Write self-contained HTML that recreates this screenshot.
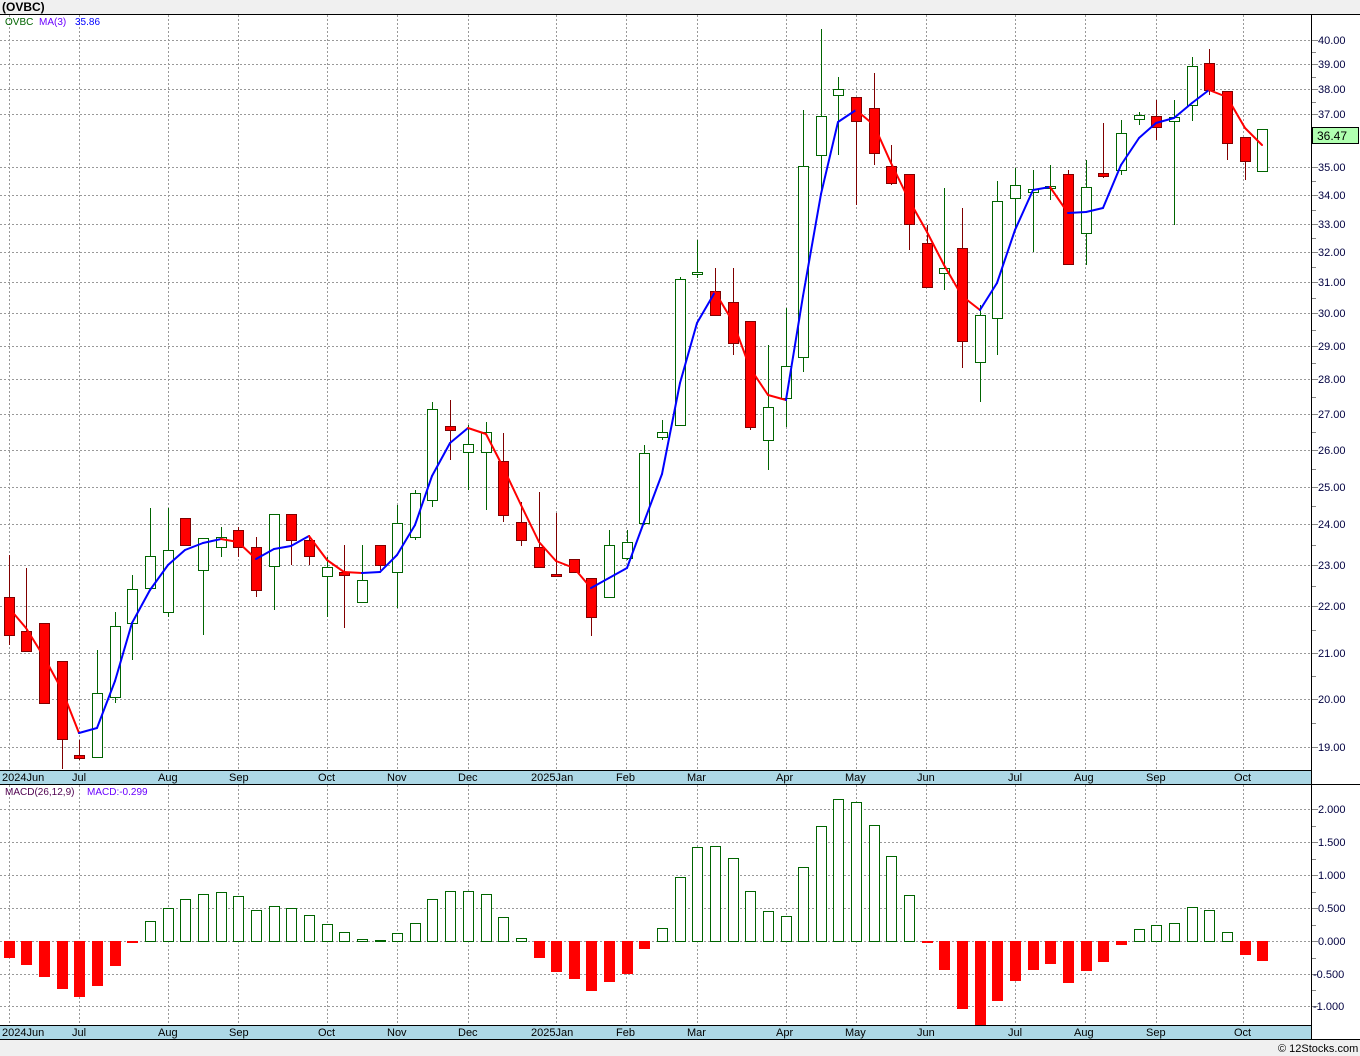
<!DOCTYPE html>
<html><head><meta charset="utf-8"><style>
html,body{margin:0;padding:0;background:#fff;}
body{width:1360px;height:1056px;position:relative;overflow:hidden;font-family:"Liberation Sans",sans-serif;}
svg{position:absolute;left:0;top:0;}
</style></head><body>
<svg id="s" width="1360" height="1056" xmlns="http://www.w3.org/2000/svg" font-family="Liberation Sans, sans-serif">
<rect x="0" y="0" width="1360" height="14" fill="#f0f0f0"/>
<rect x="0" y="1039" width="1360" height="17" fill="#f0f0f0"/>
<g id="grid"></g>
<rect x="0" y="770" width="1311" height="14" fill="#add8e6"/>
<rect x="0" y="1025" width="1311" height="14" fill="#add8e6"/>
<g stroke="#000" stroke-width="1" fill="none">
<line x1="0" y1="14.5" x2="1360" y2="14.5"/>
<line x1="0" y1="770.5" x2="1311" y2="770.5"/>
<line x1="0" y1="784.5" x2="1360" y2="784.5"/>
<line x1="0" y1="1025.5" x2="1311" y2="1025.5"/>
<line x1="0" y1="1039.5" x2="1360" y2="1039.5"/>
<line x1="1311.5" y1="14" x2="1311.5" y2="1039"/>
</g>
<g id="data"></g>
<text x="2" y="11" font-size="12" font-weight="bold">(OVBC)</text>
<text x="5" y="25" font-size="10" fill="#006400">OVBC</text>
<text x="39" y="25" font-size="10" fill="#6a00ff">MA(3)</text>
<text x="75" y="25" font-size="10" fill="#0000ff">35.86</text>
<text x="5" y="795" font-size="10" fill="#500050">MACD(26,12,9)</text>
<text x="87" y="795" font-size="10" fill="#6a00ff">MACD:-0.299</text>
<g font-size="11" fill="#000" id="dates1">
<text x="2" y="781">2024Jun</text><text x="72" y="781">Jul</text><text x="158" y="781">Aug</text><text x="229" y="781">Sep</text><text x="318" y="781">Oct</text><text x="387" y="781">Nov</text><text x="458" y="781">Dec</text><text x="531" y="781">2025Jan</text><text x="616" y="781">Feb</text><text x="687" y="781">Mar</text><text x="776" y="781">Apr</text><text x="845" y="781">May</text><text x="917" y="781">Jun</text><text x="1008" y="781">Jul</text><text x="1074" y="781">Aug</text><text x="1146" y="781">Sep</text><text x="1234" y="781">Oct</text>
</g>
<g font-size="11" fill="#000">
<text x="2" y="1036">2024Jun</text><text x="72" y="1036">Jul</text><text x="158" y="1036">Aug</text><text x="229" y="1036">Sep</text><text x="318" y="1036">Oct</text><text x="387" y="1036">Nov</text><text x="458" y="1036">Dec</text><text x="531" y="1036">2025Jan</text><text x="616" y="1036">Feb</text><text x="687" y="1036">Mar</text><text x="776" y="1036">Apr</text><text x="845" y="1036">May</text><text x="917" y="1036">Jun</text><text x="1008" y="1036">Jul</text><text x="1074" y="1036">Aug</text><text x="1146" y="1036">Sep</text><text x="1234" y="1036">Oct</text>
</g>
<g font-size="11" fill="#000040">
<text x="1318" y="44">40.00</text><text x="1318" y="68">39.00</text><text x="1318" y="93">38.00</text><text x="1318" y="118">37.00</text><text x="1318" y="171">35.00</text><text x="1318" y="199">34.00</text><text x="1318" y="228">33.00</text><text x="1318" y="256">32.00</text><text x="1318" y="286">31.00</text><text x="1318" y="317">30.00</text><text x="1318" y="350">29.00</text><text x="1318" y="383">28.00</text><text x="1318" y="418">27.00</text><text x="1318" y="454">26.00</text><text x="1318" y="491">25.00</text><text x="1318" y="528">24.00</text><text x="1318" y="569">23.00</text><text x="1318" y="610">22.00</text><text x="1318" y="657">21.00</text><text x="1318" y="703">20.00</text><text x="1318" y="751">19.00</text>
<text x="1318" y="813">2.000</text><text x="1318" y="846">1.500</text><text x="1318" y="879">1.000</text><text x="1318" y="912">0.500</text><text x="1318" y="945">0.000</text><text x="1313" y="978">-0.500</text><text x="1313" y="1010">-1.000</text>
</g>
<rect x="1312.5" y="127.5" width="46" height="16" fill="#b0ffb0" stroke="#000"/>
<text x="1317" y="140" font-size="12" fill="#000">36.47</text>
<text x="1278" y="1052" font-size="11" fill="#000">© 12Stocks.com</text>
</svg>
<script>
var NS="http://www.w3.org/2000/svg";
function el(p,t,a){var e=document.createElementNS(NS,t);for(var k in a)e.setAttribute(k,a[k]);p.appendChild(e);return e;}
var g=document.getElementById('grid'),d=document.getElementById('data');
var months=[9,79,168,238,327,397,468,556,626,697,786,856,926,1015,1085,1156,1243];
months.forEach(function(x){
 el(g,'line',{x1:x+.5,y1:15,x2:x+.5,y2:770,stroke:'#999','stroke-dasharray':'2,2'});
 el(g,'line',{x1:x+.5,y1:785,x2:x+.5,y2:1025,stroke:'#999','stroke-dasharray':'2,2'});
 el(g,'line',{x1:x+.5,y1:1025,x2:x+.5,y2:1031,stroke:'#999'});
 el(g,'line',{x1:x+.5,y1:770,x2:x+.5,y2:776,stroke:'#999'});
});
var py=[40,64,89,114,167,195,224,252,282,313,346,379,414,450,487,524,565,606,653,699,747];
py.forEach(function(y){el(g,'line',{x1:0,y1:y+.5,x2:1311,y2:y+.5,stroke:'#999','stroke-dasharray':'2,2'});el(g,'line',{x1:1311,y1:y+.5,x2:1318,y2:y+.5,stroke:'#888'});});
for(var i=0;i<py.length-1;i++){var m=Math.round((py[i]+py[i+1])/2);el(g,'line',{x1:1311,y1:m+.5,x2:1316,y2:m+.5,stroke:'#888'});}
el(g,'line',{x1:1311,y1:140.5,x2:1318,y2:140.5,stroke:'#888'});
var my=[809,842,875,908,941,974,1006];
my.forEach(function(y){el(g,'line',{x1:0,y1:y+.5,x2:1311,y2:y+.5,stroke:'#999','stroke-dasharray':'2,2'});el(g,'line',{x1:1311,y1:y+.5,x2:1318,y2:y+.5,stroke:'#888'});});
for(var i=0;i<my.length-1;i++){var m=Math.round((my[i]+my[i+1])/2);el(g,'line',{x1:1311,y1:m+.5,x2:1316,y2:m+.5,stroke:'#888'});}
// candles: x, dir(1 up,0 down), bodyTop, bodyBot, wickTop, wickBot
var C=[[9,0,597,635,555,645],[26,0,631,651,568,652],[44,0,623,703,623,704],[62,0,661,739,661,769],[79,0,755,758,740,760],[97,1,693,757,650,758],[115,1,626,697,612,703],[132,1,589,623,575,660],[150,1,556,588,508,590],[168,1,550,612,508,617],[185,0,518,545,518,545],[203,1,538,570,538,635],[221,1,537,547,527,557],[238,0,530,547,527,557],[256,0,547,590,537,597],[274,1,514,566,514,610],[291,0,514,540,514,565],[309,0,540,556,535,565],[327,1,567,576,557,617],[344,0,572,575,545,628],[362,1,580,602,545,602],[380,0,545,565,545,570],[397,1,523,572,505,608],[415,1,493,537,490,540],[432,1,409,500,402,507],[450,0,426,430,400,460],[468,1,444,452,425,490],[486,1,432,452,422,510],[503,0,461,515,433,522],[521,0,522,540,502,546],[539,0,547,567,492,567],[556,0,574,576,513,577],[574,0,559,572,559,572],[591,0,578,617,578,636],[609,1,545,597,530,597],[627,1,542,558,530,560],[644,1,453,523,445,525],[662,1,432,437,420,440],[680,1,279,425,277,426],[697,1,272,274,240,278],[715,0,291,315,268,315],[733,0,302,343,268,355],[750,0,321,427,321,430],[768,1,407,440,345,470],[786,1,366,398,308,427],[803,1,166,357,110,372],[821,1,116,155,29,192],[838,1,89,95,77,155],[856,0,97,121,97,205],[874,0,108,153,73,165],[891,0,166,183,145,185],[909,0,174,224,174,250],[927,0,243,287,225,288],[944,1,268,273,188,290],[962,0,248,341,208,368],[980,1,315,362,305,402],[997,1,201,318,181,355],[1015,1,185,198,168,230],[1033,1,189,192,170,252],[1050,1,186,188,165,200],[1068,0,174,264,170,265],[1086,1,187,233,160,265],[1103,0,173,176,123,178],[1121,1,133,170,120,175],[1139,1,115,119,112,125],[1156,0,116,127,100,140],[1174,1,117,121,100,225],[1192,1,66,105,57,121],[1209,0,63,90,49,95],[1227,0,91,143,91,160],[1245,0,137,161,137,180],[1262,1,129,171,129,171]];
C.forEach(function(c){
 var col=c[1]?'#006400':'#800000';
 el(d,'line',{x1:c[0]+.5,y1:c[4],x2:c[0]+.5,y2:c[5],stroke:col});
 el(d,'rect',{x:c[0]-5+.5,y:c[2]+.5,width:10,height:Math.max(1,c[3]-c[2]),fill:c[1]?'#fff':'#f00',stroke:c[1]?'#006400':'#800000'});
});
var M=[[9,608],[26,628],[44,657],[62,690],[79,733],[97,728],[115,681],[132,623],[150,590],[168,565],[185,550],[203,543],[221,539],[238,542],[256,559],[274,549],[291,546],[309,536],[327,560],[344,572],[362,573],[380,572],[397,555],[415,525],[432,476],[450,443],[468,428],[486,434],[503,467],[521,505],[539,542],[556,561],[574,568],[591,588],[609,578],[627,568],[644,522],[662,474],[680,383],[697,323],[715,292],[733,322],[750,368],[768,395],[786,400],[803,296],[821,194],[838,122],[856,110],[874,125],[891,163],[909,200],[927,232],[944,265],[962,296],[980,310],[997,283],[1015,230],[1033,190],[1050,187],[1068,213],[1086,212],[1103,208],[1121,165],[1139,138],[1156,123],[1174,118],[1192,103],[1209,90],[1227,97],[1245,128],[1262,145]];
for(var i=1;i<M.length;i++){el(d,'line',{x1:M[i-1][0],y1:M[i-1][1],x2:M[i][0],y2:M[i][1],stroke:M[i][1]>M[i-1][1]?'#f00':'#00f','stroke-width':2,'stroke-linecap':'round'});}
var B=[[9,958],[26,965],[44,977],[62,989],[79,997],[97,986],[115,966],[132,943],[150,921],[168,908],[185,899],[203,894],[221,892],[238,896],[256,910],[274,906],[291,908],[309,915],[327,924],[344,932],[362,939],[380,940],[397,933],[415,923],[432,899],[450,891],[468,891],[486,894],[503,917],[521,938],[539,958],[556,972],[574,979],[591,991],[609,982],[627,974],[644,949],[662,928],[680,877],[697,847],[715,846],[733,858],[750,891],[768,911],[786,916],[803,867],[821,826],[838,799],[856,802],[874,825],[891,856],[909,895],[927,943],[944,970],[962,1009],[980,1025],[997,1001],[1015,981],[1033,970],[1050,964],[1068,983],[1086,971],[1103,962],[1121,945],[1139,929],[1156,925],[1174,923],[1192,907],[1209,910],[1227,932],[1245,955],[1262,961]];
B.forEach(function(b){
 var neg=b[1]>941;var t=neg?941:b[1],h=Math.abs(b[1]-941);
 if(neg)el(d,'rect',{x:b[0]-5,y:941,width:11,height:Math.max(1,h),fill:'#f00'});
 else el(d,'rect',{x:b[0]-5+.5,y:t+.5,width:10,height:Math.max(1,h),fill:'#fff',stroke:'#006400'});
});
</script>
</body></html>
